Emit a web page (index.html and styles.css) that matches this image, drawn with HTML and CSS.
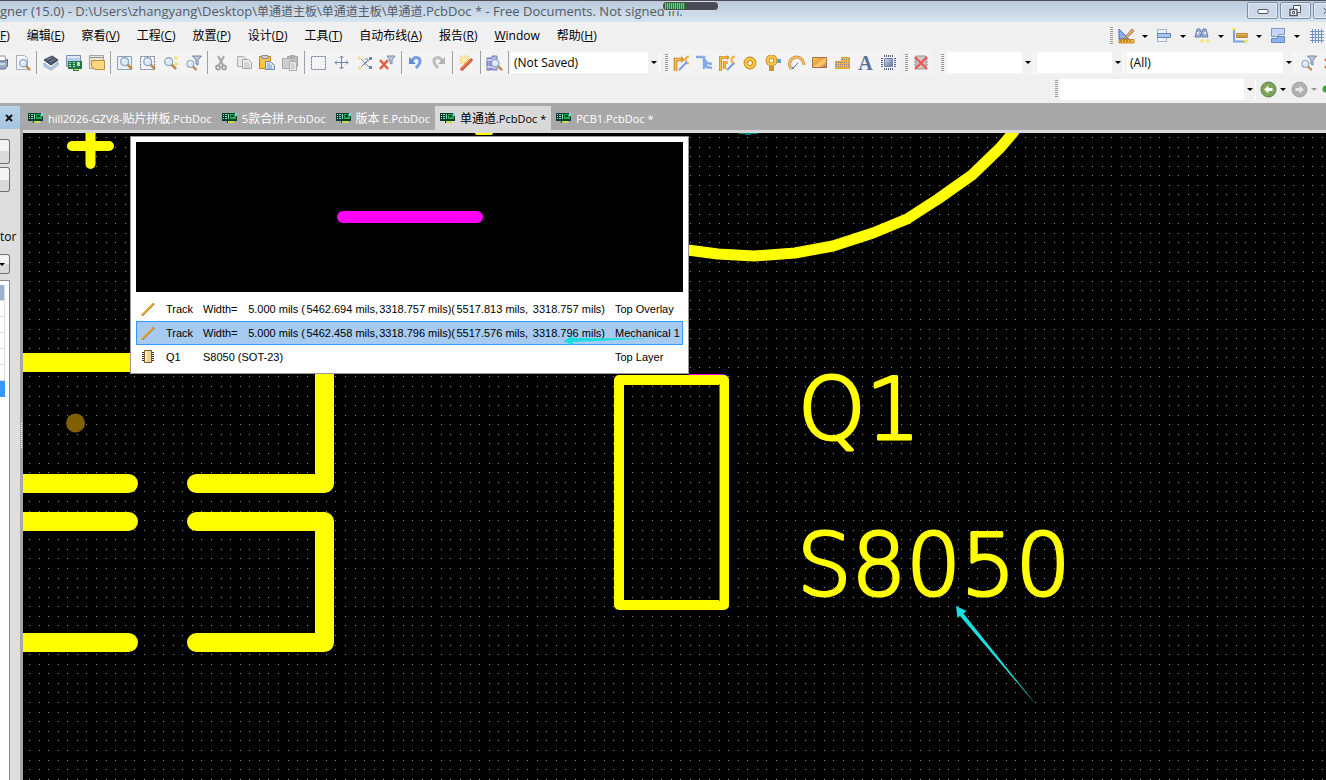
FILE: index.html
```html
<!DOCTYPE html>
<html lang="zh-CN">
<head>
<meta charset="utf-8">
<title>Designer (15.0)</title>
<link rel="stylesheet" href="styles.css">
</head>
<body>
<svg class="defs" aria-hidden="true">
  <defs>
    <linearGradient id="bronze" x1="0" y1="0" x2="1" y2="1"><stop offset="0" stop-color="#ffd24a"/><stop offset=".4" stop-color="#e9a24a"/><stop offset=".6" stop-color="#ffd070"/><stop offset="1" stop-color="#9c6a68"/></linearGradient>
    <linearGradient id="steel" x1="0" y1="0" x2="1" y2="1"><stop offset="0" stop-color="#d4dcec"/><stop offset="1" stop-color="#5f7398"/></linearGradient>
    <symbol id="pcb" viewBox="0 0 16 12"><path d="M0 1h15v8h-3v2H5V9H0z" fill="#073c33"/><path d="M1 2h1v1H1zM3 2h2v1H3zM1 4h1v1H1zM3 4h2v1H3zM1 6h1v1H1zM3 6h2v1H3zM6 2h1v5H6z" fill="#8ee0b8"/><path d="M8 2h6v5H8z" fill="#27a556"/><path d="M9 3h3v2H9z" fill="#063d2c"/><path d="M13 1h2v3h-2z" fill="#79d7e0"/><path d="M6 9h6v2H6z" fill="#c9dd3c"/></symbol>
    <symbol id="lens" viewBox="0 0 16 16"><path d="M9 9l5 5" stroke="#c08a4a" stroke-width="3" stroke-linecap="round"/><circle cx="6.500" cy="6.500" r="4.500" fill="#dbeaf8" stroke="#8fa4bd" stroke-width="1.500"/><path d="M4 6a3 3 0 0 1 3-2" stroke="#fff" stroke-width="1.500" fill="none"/></symbol>
    <symbol id="funnel" viewBox="0 0 16 16"><use href="#lens" x="0" y="4" width="12" height="12"/><path d="M7 1h9l-3.500 4v5l-2-1V5z" fill="#bccbe0" stroke="#6f86a6"/></symbol>
    <symbol id="trk" viewBox="0 0 16 14"><path d="M2 13.500L14 1.500" stroke="#8b5a13" stroke-width="2"/><path d="M2 13L13.500 1.500" stroke="#ffb428" stroke-width="1.400"/></symbol>
    <symbol id="pad" viewBox="0 0 16 16"><circle cx="8" cy="8" r="4.200" fill="none" stroke="#b9852b" stroke-width="4.400"/><circle cx="8" cy="8" r="4.200" fill="none" stroke="#fbc73c" stroke-width="2.800"/></symbol>
  </defs>
</svg>

<div class="app">
  <header class="titlebar">
    <h1 class="title">gner (15.0) - D:\Users\zhangyang\Desktop\<span class="cjk">单通道主板</span>\<span class="cjk">单通道主板</span>\<span class="cjk">单通道</span>.PcbDoc * - Free Documents. Not signed in.</h1>
    <div class="meter"><span class="meter-fill"></span></div>
    <div class="winbtns">
      <button class="winbtn" aria-label="Minimize"><svg width="12" height="8"><rect x="1" y="2.500" width="10" height="4" rx="1" fill="#fff" stroke="#4e5566"/></svg></button>
      <button class="winbtn" aria-label="Restore"><svg width="13" height="12"><path d="M4.500.5h7v7h-7z" fill="#fff" stroke="#4e5566"/><path d="M1 4.500h7v6H1z" fill="#fff" stroke="#4e5566" stroke-width="1.400"/><path d="M3.500 6.500h2v2h-2z" fill="none" stroke="#4e5566"/></svg></button>
      <button class="winbtn" aria-label="Close"><svg width="12" height="10"><path d="M2 1l8 8M10 1L2 9" stroke="#4e5566" stroke-width="4"/><path d="M2 1l8 8M10 1L2 9" stroke="#fff" stroke-width="2"/></svg></button>
    </div>
  </header>

  <div class="menubar">
    <nav class="menus">
      <button class="menu"><u>F</u>)</button><button class="menu">编辑(<u>E</u>)</button><button class="menu">察看(<u>V</u>)</button><button class="menu">工程(<u>C</u>)</button><button class="menu">放置(<u>P</u>)</button><button class="menu">设计(<u>D</u>)</button><button class="menu">工具(<u>T</u>)</button><button class="menu">自动布线(<u>A</u>)</button><button class="menu">报告(<u>R</u>)</button><button class="menu"><u>W</u>indow</button><button class="menu">帮助(<u>H</u>)</button>
    </nav>
    <div class="utility">
      <span class="grip"></span>
      <button class="drop" aria-label="Utility tools"><svg width="17" height="16"><path d="M1 1v10h10z" fill="#8fb0ee" stroke="#4a6fc4"/><path d="M7 9l7-8 2 2-7 7-3 1z" fill="#e9b26a" stroke="#8c6a50" stroke-width=".8"/><path d="M1 11.500h15v3.500H1z" fill="#f6b93c" stroke="#b67b1c" stroke-width=".8"/><path d="M3 12v2M6 12v2M9 12v2M12 12v2" stroke="#8a5a10"/></svg></button>
      <button class="drop" aria-label="Align"><svg width="17" height="16"><path d="M1.500 1.500h9v4h-9zM1.500 9.500h9v4h-9z" fill="#eef2f8" stroke="#a3b1c8"/><path d="M1.500 5.500h13v4h-13z" fill="#a9c5f4" stroke="#6485c4"/></svg></button>
      <button class="drop" aria-label="Find"><svg width="17" height="16"><path d="M3 1h3l1 3h1l1-3h3l2 8H8V6H7v3H1z" fill="#9db1d8" stroke="#536a9c" stroke-width=".8"/><path d="M3 5h2M10 5h2" stroke="#fff" stroke-width="1.500"/><path d="M6 13h4M12 13h4M8 11v4M14 11v4" stroke="#f4e370" stroke-width="1.500"/></svg></button>
      <button class="drop" aria-label="Dimension"><svg width="17" height="16"><path d="M2 2v12M1 13.500h13" stroke="#7da2ea" stroke-width="2"/><path d="M4.500 5.500h11v4h-11z" fill="#f2b75a" stroke="#a87424" stroke-width=".8"/><path d="M7 7v2M9 7v2M11 7v2M13 7v2" stroke="#875a1a" stroke-width=".8"/><path d="M0 1h4M12 13h4" stroke="#f6e45e" stroke-width="2"/></svg></button>
      <button class="drop" aria-label="Rooms"><svg width="17" height="16"><path d="M1.500.5h13v6h-6v2h-7z" fill="#c5d7f7" stroke="#8095bb"/><path d="M1.500 10.500h6v-2h7v6h-13z" fill="#8eb1f0" stroke="#6785bd"/></svg></button>
      <button class="gridbtn" aria-label="Grid"><svg width="16" height="16"><path d="M3.500 1v14M6.500 1v14M9.500 1v14M12.500 1v14M1 3.500h14M1 6.500h14M1 9.500h14M1 12.500h14" stroke="#7393c8"/></svg></button>
    </div>
  </div>

  <div class="toolbar">
    <div class="tools main-tools">
      <button class="tool" aria-label="Print"><svg width="16" height="16"><path d="M4 1h9l1 5H4z" fill="#fff" stroke="#8090aa"/><path d="M3 6h11l1.500-2v7L13 14H3z" fill="#9aabc6" stroke="#5e6f8c"/><path d="M4 9h9" stroke="#fff"/></svg></button>
      <button class="tool" aria-label="Preview"><svg width="16" height="16"><path d="M1.500.5h8l3 3v11h-11z" fill="#f4f6fa" stroke="#a2adbf"/><use href="#lens" x="3" y="3" width="13" height="13"/></svg></button>
      <span class="sep"></span>
      <button class="tool" aria-label="Layers"><svg width="16" height="16"><path d="M1 8l7 5 7-6v3l-7 5-7-4z" fill="#c7d7ec" stroke="#8ba4c6"/><path d="M1 5l8-4 6 4-7 5z" fill="#4c5869" stroke="#333f50"/><path d="M4 5l5-3M7 7l5-3" stroke="#8492a8"/></svg></button>
      <button class="tool" aria-label="Board"><svg width="16" height="16"><path d="M.5.500h14v11H.5z" fill="#b8cff4" stroke="#7b90b4"/><path d="M1 2h13" stroke="#fff"/><path d="M2 6h14v8h-3v2H7v-2H2z" fill="#22764a"/><path d="M3 7h2v1H3zM3 9h2v1H3zM3 11h2v1H3zM7 7h2v1H7zM7 9h2v1H7zM7 11h2v1H7zM11 7h3v4h-3z" fill="#a7e6ba"/><path d="M8 14h5v1H8z" fill="#d6e04a"/></svg></button>
      <button class="tool" aria-label="Sheet"><svg width="16" height="16"><path d="M.5.500h14v13H.5z" fill="#e6e4de" stroke="#aaa396"/><path d="M1 2.500h13" stroke="#9b9486"/><path d="M2.500 5.500h13v9H6l-3.500-3z" fill="#ffd682" stroke="#bd8c3c"/></svg></button>
      <span class="sep"></span>
      <button class="tool" aria-label="Fit document"><svg width="16" height="16"><path d="M.5 1.500h14v13H.5z" fill="#e9f0fa" stroke="#8ea0bb"/><use href="#lens" x="2" y="1" width="14" height="14"/></svg></button>
      <button class="tool" aria-label="Fit area"><svg width="16" height="16"><path d="M.5 1.500h14v13H.5z" fill="none" stroke="#5f7392" stroke-dasharray="2 1"/><use href="#lens" x="2" y="1" width="14" height="14"/></svg></button>
      <button class="tool" aria-label="Zoom selected"><svg width="16" height="16"><use href="#lens" x="0" y="1" width="14" height="14"/><path d="M11 3h4M11 9h4M13 1v4M13 7v4" stroke="#f3e06c" stroke-width="1.400"/></svg></button>
      <button class="tool" aria-label="Zoom filtered"><svg width="17" height="16"><use href="#funnel" width="17" height="16"/></svg></button>
      <span class="sep"></span>
      <button class="tool" aria-label="Cut"><svg width="16" height="16"><path d="M4 1l5 9M10 1L5 10" stroke="#a9a9a9" stroke-width="2.200"/><circle cx="4" cy="12.500" r="2" fill="none" stroke="#a0a0a0" stroke-width="1.800"/><circle cx="10" cy="12.500" r="2" fill="none" stroke="#a0a0a0" stroke-width="1.800"/></svg></button>
      <button class="tool" aria-label="Copy"><svg width="16" height="16"><path d="M.5 1.500h6l3 3v7h-9z" fill="#e6e6e6" stroke="#b0b0b0"/><path d="M5.500 4.500h6l3 3v6h-9z" fill="#eee" stroke="#a6a6a6"/><path d="M7 8h5M7 10h6M7 12h6" stroke="#bbb"/></svg></button>
      <button class="tool" aria-label="Paste"><svg width="17" height="16"><path d="M.5 1.500h11v12H.5z" fill="#fbc445" stroke="#bd8523"/><path d="M3 .5h6v3H3z" fill="#ccd2dc" stroke="#8b8d94"/><path d="M6.500 6.500h5l4 4v4h-9z" fill="#dbe6fa" stroke="#6e87b9"/><path d="M8 9h3M8 11h5M8 13h5" stroke="#7c92c0"/></svg></button>
      <button class="tool" aria-label="Paste array"><svg width="17" height="16"><path d="M5.500 1.500h10v10h-10z" fill="#bcbcbc" stroke="#9f9f9f"/><path d="M.5 3.500h9v10h-9z" fill="#cecece" stroke="#a8a8a8"/><path d="M8 0h5v3H8z" fill="#aaa"/><path d="M7.500 6.500h5l2 2v7h-7z" fill="#ececec" stroke="#aaa"/><path d="M9 9h3M9 11h4M9 13h4" stroke="#b2b2b2"/></svg></button>
      <span class="sep"></span>
      <button class="tool" aria-label="Select area"><svg width="16" height="16"><path d="M.5 1.500h14v13H.5z" fill="none" stroke="#5e769b" stroke-dasharray="2 1"/></svg></button>
      <button class="tool" aria-label="Move"><svg width="16" height="16"><path d="M7.500 1v13M1 7.500h13M5.500 3l2-2 2 2M5.500 12l2 2 2-2M3 5.500l-2 2 2 2M12 5.500l2 2-2 2" fill="none" stroke="#73839b"/></svg></button>
      <button class="tool" aria-label="Deselect"><svg width="16" height="16"><path d="M4 4l8 8M4 12l7-7M7 10l3-3M8 4h3v3" fill="none" stroke="#798aa7"/><path d="M1 3h3M1 13h3M2 1v4M2 11v4" stroke="#f1e276" stroke-width="1.400"/><path d="M12 2h3v3h-3zM12 11h3v3h-3z" fill="#7086a6"/></svg></button>
      <button class="tool" aria-label="Clear filter"><svg width="17" height="16"><path d="M8 1h8l-3 4v4l-2-1V5z" fill="#bdcce0" stroke="#758aaa"/><path d="M1 5l8 9M9 5l-8 9" stroke="#e75a3c" stroke-width="2.400"/></svg></button>
      <span class="sep"></span>
      <button class="tool" aria-label="Undo"><svg width="16" height="16"><path d="M4 6c2-5 8-4 8 0 0 3-2 5-4 7" fill="none" stroke="#729be5" stroke-width="3"/><path d="M1 2v7h7z" fill="#5e89d9"/></svg></button>
      <button class="tool" aria-label="Redo"><svg width="16" height="16"><path d="M11 6C9 1 3 2 3 6c0 3 2 5 4 7" fill="none" stroke="#bcbcbc" stroke-width="3"/><path d="M14 2v7H7z" fill="#b2b2b2"/></svg></button>
      <span class="sep"></span>
      <button class="tool" aria-label="Wizard"><svg width="16" height="16"><path d="M1 1l9 9M10 1L1 9M5.500 0v10M0 5h10" stroke="#f6d97a" stroke-width="1.600"/><circle cx="5.500" cy="5" r="2" fill="#fff2b8"/><path d="M3 14L12 5" stroke="#d9603c" stroke-width="3.500" stroke-linecap="round"/><path d="M3 13l8-8" stroke="#ff9c74"/></svg></button>
      <span class="sep"></span>
      <button class="tool" aria-label="Browse library"><svg width="17" height="16"><path d="M1 3h4v12H1z" fill="#9da0dc" stroke="#6a6ab4"/><path d="M6 1h5v14H6z" fill="#b6bae8" stroke="#7578bd"/><path d="M1 5h10M1 12h10" stroke="#fff"/><use href="#lens" x="4" y="3" width="13" height="13"/></svg></button>
      <span class="sep"></span>
    </div>
    <div class="combo combo-saved"><select aria-label="Snippet"><option>(Not Saved)</option></select></div>
    <div class="tools wiring-tools">
      <span class="grip"></span>
      <button class="tool" aria-label="Route"><svg width="17" height="16"><path d="M2.500 16V4.500H9" fill="none" stroke="#bd7e28" stroke-width="3.600"/><path d="M2.500 16V4.500H9" fill="none" stroke="#f7bd42" stroke-width="2"/><path d="M8 1l4 3.500L8 8z" fill="#d99a36"/><path d="M16 1.500a3.500 3.500 0 0 0 0 7" fill="none" stroke="#e8b13c" stroke-width="2"/><path d="M6 15l8-8" stroke="#799ee9" stroke-width="2"/></svg></button>
      <button class="tool" aria-label="Differential route"><svg width="17" height="16"><path d="M0 2h8v12M8 4l3 4 5 1M8 8l3 4 5 1" fill="none" stroke="#86a9ee" stroke-width="2.500"/></svg></button>
      <button class="tool" aria-label="Multi route"><svg width="17" height="16"><path d="M1.500 16V2.500H9M5.500 14V7.500h3" fill="none" stroke="#bd7e28" stroke-width="3.200"/><path d="M1.500 16V2.500H9M5.500 14V7.500h3" fill="none" stroke="#f7bd42" stroke-width="1.800"/><path d="M8 0l3 2.500L8 5z" fill="#d99a36"/><path d="M16 1.500a3.500 3.500 0 0 0 0 7" fill="none" stroke="#e8b13c" stroke-width="2"/><path d="M8 15l7-7" stroke="#799ee9" stroke-width="2"/></svg></button>
      <button class="tool" aria-label="Pad"><svg width="16" height="16"><use href="#pad" x="-1" width="16" height="16"/></svg></button>
      <button class="tool" aria-label="Via"><svg width="17" height="16"><path d="M4 9h5v7H4z" fill="#d19336"/><path d="M9 4h7v4H9z" fill="#54a7c7"/><use href="#pad" x="-1" y="-2" width="15" height="15"/></svg></button>
      <button class="tool" aria-label="Arc"><svg width="17" height="16"><path d="M3.500 14A7 7 0 1 1 15.500 10" fill="none" stroke="#c08a48" stroke-width="3"/><path d="M3.500 14A7 7 0 1 1 15.500 10" fill="none" stroke="#f7be62" stroke-width="1.600"/><path d="M5 13l5-5" stroke="#5078b4"/><path d="M4 12h2v2H4z" fill="#4e86c8"/></svg></button>
      <button class="tool" aria-label="Fill"><svg width="16" height="16"><path d="M.5 2.500h14v10H.5z" fill="url(#bronze)" stroke="#a86e48"/></svg></button>
      <button class="tool" aria-label="Polygon"><svg width="16" height="16"><path d="M.5 6.500h6v-4h8v11H.5z" fill="#f5b940" stroke="#dca334"/><path d="M1 7.500h13M1 9.500h13M1 11.500h13M7 4.500h7" stroke="#8c7886" stroke-dasharray="1 1"/></svg></button>
      <button class="tool" aria-label="String"><span class="letter-icon">A</span></button>
      <button class="tool" aria-label="Component"><svg width="16" height="16"><path d="M3.500 3.500h8v8h-8z" fill="url(#steel)" stroke="#7486a6"/><path d="M3 1h10M3 14h10" stroke="#52647f" stroke-width="2" stroke-dasharray="1 1"/><path d="M1 3v10M14 3v10" stroke="#52647f" stroke-width="2" stroke-dasharray="1 1"/></svg></button>
    </div>
    <div class="tools drc-tools">
      <span class="grip"></span>
      <button class="tool" aria-label="Clear violations"><svg width="16" height="16"><path d="M2 1h10v13H2z" fill="#cfc8c4" stroke="#9d9a94"/><path d="M0 4h2M0 7h2M0 10h2M12 4h2M12 7h2M12 10h2" stroke="#8c8c84"/><path d="M1 2l12 12M13 2L1 14" stroke="#ee5252" stroke-width="2"/></svg></button>
    </div>
    <div class="tools filter-tools">
      <span class="grip"></span>
      <div class="combo combo-net"><select aria-label="Net"><option></option></select></div>
      <div class="combo combo-net"><select aria-label="Component"><option></option></select></div>
      <div class="combo combo-all"><select aria-label="Filter"><option>(All)</option></select></div>
      <button class="tool" aria-label="Apply filter"><svg width="17" height="16"><use href="#funnel" width="17" height="16"/></svg></button>
      <button class="tool" aria-label="Remove filter"><svg width="16" height="16"><path d="M1 4l9 9M10 4l-9 9" stroke="#e75a3c" stroke-width="2.400"/></svg></button>
    </div>
  </div>

  <div class="navbar">
    <span class="grip"></span>
    <div class="combo combo-nav"><select aria-label="Address"><option></option></select></div>
    <button class="navbtn" aria-label="Back"><svg width="17" height="17"><circle cx="8.500" cy="8.500" r="7.500" fill="#7da45a" stroke="#5e7f48"/><path d="M4 8.500l4.500-4v2.500h4v3h-4v2.500z" fill="#fff"/></svg></button>
    <button class="navbtn" aria-label="Forward"><svg width="17" height="17"><circle cx="8.500" cy="8.500" r="7.500" fill="#b0b0b0" stroke="#a0a0a0"/><path d="M13 8.500l-4.500-4v2.500h-4v3h4v2.500z" fill="#e6e6e6"/></svg></button>
    <button class="homebtn" aria-label="Home"><svg width="10" height="16"><circle cx="4" cy="8" r="3.500" fill="#3fa33a"/></svg></button>
  </div>

  <main class="workspace">
    <aside class="side">
      <div class="side-head"><button class="side-close" aria-label="Close panel"><svg width="8" height="8"><path d="M1 1l6 6M7 1L1 7" stroke="#111" stroke-width="2"/></svg></button></div>
      <div class="side-body">
        <button class="side-btn" aria-label="Apply"></button>
        <button class="side-btn" aria-label="Clear"></button>
        <p class="side-label">tor</p>
        <button class="side-drop" aria-label="Choose"></button>
        <ul class="side-list"><li class="side-top"></li><li></li><li></li><li></li><li></li><li></li><li class="side-sel"></li></ul>
      </div>
    </aside>
    <div class="splitter"><span class="splitter-dots"></span></div>
    <section class="docs">
      <div class="tabs" role="tablist">
        <button class="tab" role="tab"><svg width="16" height="12"><use href="#pcb"/></svg><span>hill2026-GZV8-<span class="cjk">贴片拼板</span>.PcbDoc</span></button>
        <button class="tab" role="tab"><svg width="16" height="12"><use href="#pcb"/></svg><span>5<span class="cjk">款合拼</span>.PcbDoc</span></button>
        <button class="tab" role="tab"><svg width="16" height="12"><use href="#pcb"/></svg><span><span class="cjk">版本</span> E.PcbDoc</span></button>
        <button class="tab tab-active" role="tab" aria-selected="true"><svg width="16" height="12"><use href="#pcb"/></svg><span><span class="cjk">单通道</span>.PcbDoc *</span></button>
        <button class="tab" role="tab"><svg width="16" height="12"><use href="#pcb"/></svg><span>PCB1.PcbDoc *</span></button>
      </div>
      <div class="board">
        <svg class="board-art">
          <g transform="translate(-23 -133)">
            <path id="grid" stroke="#8f8f8f" shape-rendering="crispEdges"/>
            <g fill="none" stroke="#ff0" stroke-linecap="round" stroke-linejoin="round">
              <path d="M72 146h37M90.500 125v39" stroke-width="10"/>
              <path d="M0 362.500H150M0 483.500H128.500M0 521.500H128.500M0 642.500H128.500M324.500 340V483.500H196.500M196.500 521.500H324.500V642.500H196.500" stroke-width="19"/>
              <path d="M680 249L718 254 754 256 795 253 833 246 873 233 907 219 938 199 972 175 1000 148 1012 134 1028 112" stroke-width="11"/>
              <path d="M477 133h14" stroke-width="4"/>
            </g>
            <path d="M619 380H724V605H619z" fill="none" stroke="#ff0" stroke-width="10" stroke-linejoin="round"/>
            <path d="M689 374.500H724M719.500 384V601" stroke="#f0f"/>
            <circle cx="75.500" cy="423" r="9.500" fill="#806000"/>
            <path d="M739 133h19v1h-7v1h-6v-1h-6z" fill="#008080"/>
            <text class="silk" x="798" y="439">Q1</text>
            <text class="silk" x="797" y="595">S8050</text>
          </g>
        </svg>
        <div class="popup">
          <svg class="preview" viewBox="0 0 547 150"><path d="M207 75h134" stroke="#f0f" stroke-width="12" stroke-linecap="round"/></svg>
          <table class="hits">
            <colgroup><col class="c-icon"><col class="c-name"><col class="c-label"><col class="c-width"><col class="c-x"><col class="c-y"><col class="c-x"><col class="c-y"><col></colgroup>
            <tr><td><svg width="16" height="14"><use href="#trk"/></svg></td><td>Track</td><td>Width=</td><td class="num">5.000 mils (</td><td class="num">5462.694 mils,</td><td class="num">3318.757 mils)(</td><td class="num">5517.813 mils,</td><td class="num">3318.757 mils)</td><td class="layer">Top Overlay</td></tr>
            <tr class="hit-sel"><td><svg width="16" height="14"><use href="#trk"/></svg></td><td>Track</td><td>Width=</td><td class="num">5.000 mils (</td><td class="num">5462.458 mils,</td><td class="num">3318.796 mils)(</td><td class="num">5517.576 mils,</td><td class="num">3318.796 mils)</td><td class="layer">Mechanical 1</td></tr>
            <tr><td><svg width="16" height="14"><path d="M2 2.500h12M2 4.500h12M2 6.500h12M2 8.500h12M2 10.500h12" stroke="#3d3423"/><path d="M4.500.5h7v12h-7z" fill="#f3d391" stroke="#7d5b1e"/><path d="M6 1v11" stroke="#fff0c4" stroke-width="2"/></svg></td><td>Q1</td><td colspan="6">S8050 (SOT-23)</td><td class="layer">Top Layer</td></tr>
          </table>
        </div>
        <svg class="arrows">
          <g transform="translate(-23 -133)" fill="#1adede">
            <path d="M563 341l10-5v2l77 0.500-77 3.500v3z"/>
            <path d="M956 606l10.500 5-3 2.500 74.500 93.500L960 616l-2.500 2z"/>
          </g>
        </svg>
      </div>
    </section>
  </main>
</div>
<script src="grid.js"></script>
</body>
</html>
```
FILE: styles.css
```css
* { box-sizing: border-box; }
html, body { margin: 0; height: 100%; }
body { font-family: "Open Sans", "Noto Sans CJK SC", sans-serif; font-size: 12px; color: #000; background: #f0f0f0; overflow: hidden; }
button { font: inherit; color: inherit; background: none; border: 0; padding: 0; margin: 0; white-space: nowrap; }
svg { display: block; flex: none; }
.defs { position: absolute; width: 0; height: 0; }
.cjk { font-size: 12px; }
.app { display: flex; flex-direction: column; height: 100vh; }

.titlebar { position: relative; display: flex; align-items: center; height: 22px; border-top: 1px solid #4c4e55; background: linear-gradient(#b9c9dc, #d8e5f1); overflow: hidden; flex: none; }
.title { flex: 1; min-width: 0; margin: 0; font-size: 13px; font-weight: 400; line-height: 20px; color: #525b66; white-space: nowrap; overflow: hidden; }
.meter { position: absolute; left: 662px; top: 0; width: 57px; height: 10px; border: 1px solid #d8dde4; border-radius: 4px; background: #484b55; }
.meter-fill { display: block; width: 20px; height: 6px; margin: 1px 0 0 2px; background: repeating-linear-gradient(90deg, #58e070 0 1px, #2b7d45 1px 2px); }
.winbtns { display: flex; gap: 2px; margin-right: -18px; align-self: flex-start; padding-top: 1px; }
.winbtn { display: flex; align-items: center; justify-content: center; width: 31px; height: 17px; border: 1px solid #7e8ea6; border-radius: 2px; background: #cbd8e8; box-shadow: inset 0 0 0 1px #e2eaf3; }

.menubar { display: flex; justify-content: space-between; height: 28px; flex: none; }
.menus { display: flex; align-items: center; gap: 1px; margin-left: -8px; }
.menu { padding: 0 8px; font-size: 12px; line-height: 20px; }
.utility { display: flex; align-items: center; }
.grip { width: 3px; height: 18px; margin-right: 2px; background: repeating-linear-gradient(#9a9a9a 0 1px, transparent 1px 2px); flex: none; }
.drop { display: flex; align-items: center; width: 38px; padding-left: 3px; gap: 7px; }
.drop::after, .navbtn::after, .combo::after, .side-drop::after { content: ""; border: 3px solid transparent; border-top-color: #000; border-bottom: 0; }
.gridbtn { width: 21px; padding-left: 4px; overflow: hidden; }

.toolbar { display: flex; align-items: center; height: 25px; overflow: hidden; flex: none; }
.tools { display: flex; align-items: center; height: 25px; background: #f3f3f3; flex: none; }
.main-tools { margin-left: -12px; }
.tool { display: flex; align-items: center; justify-content: center; width: 23px; height: 24px; flex: none; }
.sep { width: 1px; height: 23px; margin: 0 2px; background: #a0a0a0; }
.letter-icon { font: 700 20px/20px "Liberation Serif", serif; color: #5c6f9c; }
.combo { position: relative; display: flex; align-items: center; height: 21px; background: #fff; border-right: 1px solid #fff; flex: none; }
.combo select { appearance: none; width: 100%; height: 21px; border: 0; border-radius: 0; padding: 0 14px 0 3px; margin: 0; background: linear-gradient(90deg, #fff, #fff) left / calc(100% - 11px) 100% no-repeat #f1f1f1; font: inherit; font-size: 12px; color: #000; }
.combo::after { position: absolute; right: 2px; top: 9px; }
.combo-saved { width: 149px; margin-right: 5px; }
.combo-net { width: 87px; margin-right: 3px; }
.combo-all { width: 168px; margin-right: 2px; }
.drc-tools { margin-left: 5px; }
.filter-tools { margin-left: 8px; }
.filter-tools .grip { margin-right: 3px; }

.navbar { display: flex; align-items: center; justify-content: flex-end; height: 28px; overflow: hidden; flex: none; }
.combo-nav { width: 196px; margin-right: 4px; }
.navbtn { display: flex; align-items: center; gap: 3px; width: 31px; }
.navbtn + .navbtn::after { border-top-color: #999; }
.homebtn { width: 4px; overflow: hidden; }

.workspace { display: flex; flex: 1; min-height: 0; background: #a8a8a8; }
.side { display: flex; flex-direction: column; width: 20px; padding-top: 3px; flex: none; }
.side-head { display: flex; align-items: center; height: 23px; padding-left: 5px; background: linear-gradient(#b9d3e8, #a5c5df); }
.side-body { display: flex; flex-direction: column; flex: 1; padding-top: 10px; background: #dedede; }
.side-btn, .side-drop { width: 10px; height: 25px; margin-bottom: 3px; border: 1px solid #707070; border-left: 0; border-radius: 0 3px 3px 0; background: linear-gradient(#f4f4f4 50%, #dadada 50%); }
.side-label { margin: 32px 0 7px; line-height: 20px; font-size: 12px; }
.side-drop { display: flex; align-items: center; justify-content: flex-end; height: 20px; padding-right: 4px; margin-bottom: 6px; }
.side-list { flex: 1; width: 10px; margin: 0; padding: 4px 4px 0 0; list-style: none; background: #fff; border: 1px solid #8c8c8c; border-left: 0; border-bottom: 0; }
.side-list li { height: 16px; border-bottom: 1px solid #ddd; border-right: 1px solid #ddd; }
.side-list .side-top { background: #9ab3d1; }
.side-list .side-sel { background: #39f; border-color: #39f; }
.splitter { display: flex; align-items: center; justify-content: center; width: 3px; flex: none; }
.splitter-dots { width: 1px; height: 25px; margin-bottom: 12px; background: repeating-linear-gradient(#fff 0 1px, transparent 1px 2px); }

.docs { display: flex; flex-direction: column; flex: 1; min-width: 0; }
.tabs { display: flex; height: 30px; padding-top: 3px; border-bottom: 3px solid #d9d9d9; flex: none; }
.tab { display: flex; align-items: center; gap: 4px; height: 24px; padding: 0 5px; color: #fff; font-size: 11px; }
.tab-active { background: #d9d9d9; color: #000; }

.board { position: relative; flex: 1; min-height: 0; background: #000; overflow: hidden; }
.board-art, .arrows { position: absolute; inset: 0; width: 100%; height: 100%; }
.arrows { pointer-events: none; }
.silk { font-family: "DejaVu Sans"; font-weight: 200; font-size: 86px; fill: #ff0; stroke: #ff0; stroke-width: 3px; stroke-linejoin: round; }

.popup { position: absolute; left: 107px; top: 3px; width: 559px; padding: 5px 5px 4px; background: #fff; border: 1px solid #999; }
.preview { width: 100%; height: 150px; background: #000; }
.hits { width: 100%; margin-top: 5px; border-collapse: collapse; table-layout: fixed; font: 11px/14px "Liberation Sans", sans-serif; }
.hits tr { height: 24px; }
.hits td { padding: 0; white-space: nowrap; overflow: visible; }
.hits td:first-child { padding-left: 4px; }
.hits .num { text-align: right; }
.hits .layer { padding-left: 10px; }
.hit-sel { background: #a6caf0; outline: 1px solid #39f; outline-offset: -1px; }
.c-icon { width: 30px; }
.c-name { width: 37px; }
.c-label { width: 40px; }
.c-width { width: 62px; }
.c-x { width: 73px; }
.c-y { width: 77px; }
```
FILE: grid.js
```js
// Snap grid: one-pixel dots at the nearest whole pixel of a 9.577 px pitch.
const pitch = 9.577;
const grid = document.getElementById("grid");

function drawGrid() {
  const right = window.innerWidth;
  const bottom = window.innerHeight;
  let d = "";
  for (let row = 0; 137 + row * pitch < bottom; row++) {
    const y = Math.round(137 + row * pitch) + 0.5;
    for (let col = 0; 29 + col * pitch < right; col++) {
      d += `M${Math.round(29 + col * pitch)} ${y}h1`;
    }
  }
  grid.setAttribute("d", d);
}

drawGrid();
window.addEventListener("resize", drawGrid);
```
